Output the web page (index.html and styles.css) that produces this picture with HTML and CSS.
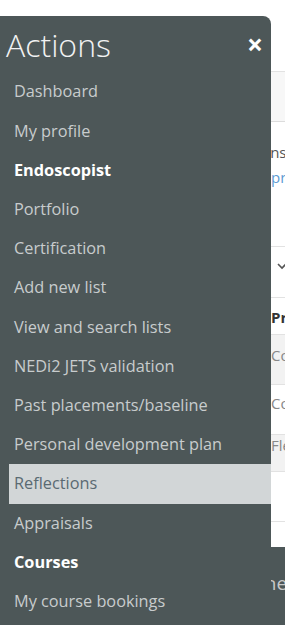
FILE: index.html
```html
<!DOCTYPE html>
<html lang="en">
<head>
    <meta charset="UTF-8">
    <meta name="viewport" content="width=device-width, initial-scale=1.0">
    <title>Portfolio</title>
    <link rel="stylesheet" href="styles.css">
</head>
<body>
    <div class="page">
        <div class="topbar"></div>
        <div class="toolbar"></div>

        <div class="intro">
            <p class="intro-line">Plans: review your list</p>
            <p class="intro-line"><a href="#">previous placements</a></p>
        </div>

        <div class="filter">
            <svg class="chevron" width="10" height="7" viewBox="0 0 10 7"><polyline points="1,1 5,5 9,1" fill="none" stroke="#555" stroke-width="1.6"/></svg>
        </div>

        <div class="lists">
            <div class="row head">Procedure</div>
            <div class="row shade first">Colonoscopy</div>
            <div class="row second">Colonoscopy</div>
            <div class="row shade third">Flexi sigmoidoscopy</div>
            <div class="row blank"></div>
            <div class="row blank last"></div>
        </div>

        <footer class="footer">
            <p>the JAG portfolio</p>
        </footer>
    </div>

    <aside class="drawer">
        <div class="drawer-head">
            <h1>Actions</h1>
            <a href="#" class="close">&times;</a>
        </div>
        <nav class="menu">
            <a href="#">Dashboard</a>
            <a href="#">My profile</a>
            <span class="section">Endoscopist</span>
            <a href="#">Portfolio</a>
            <a href="#">Certification</a>
            <a href="#">Add new list</a>
            <a href="#">View and search lists</a>
            <a href="#">NEDi2 JETS validation</a>
            <a href="#">Past placements/baseline</a>
            <a href="#">Personal development plan</a>
            <a href="#" class="active">Reflections</a>
            <a href="#">Appraisals</a>
            <span class="section">Courses</span>
            <a href="#">My course bookings</a>
        </nav>
    </aside>
</body>
</html>
```

FILE: styles.css
```css
html {
    height: 625px;
    overflow: hidden;
}
body {
    font-family: "Open Sans", Arial, sans-serif;
    margin: 0;
    padding: 0;
    background-color: #fff;
    overflow: hidden;
    height: 625px;
}
.page {
    width: 285px;
    white-space: nowrap;
    overflow: hidden;
}
.topbar {
    height: 71px;
}
.toolbar {
    height: 49px;
    background-color: #f7f7f7;
    border-top: 1px solid #e2e2e2;
    border-bottom: 1px solid #dcdcdc;
}
.intro {
    height: 124px;
    padding-top: 18px;
    box-sizing: border-box;
}
.intro-line {
    margin: 0;
    padding-left: 249px;
    font-size: 15px;
    line-height: 25px;
    color: #555;
}
.intro-line a {
    color: #5d9bd3;
    text-decoration: none;
    margin-left: 22px;
}
.filter {
    height: 52px;
    padding: 16px 0 0 277px;
    box-sizing: border-box;
    border-top: 1px solid #e2e2e2;
    border-bottom: 1px solid #e2e2e2;
}
.filter .chevron {
    display: block;
}
.lists {
    font-size: 15px;
    line-height: 20px;
}
.row {
    box-sizing: border-box;
    height: 50px;
    padding-left: 271px;
    border-bottom: 1px solid #e2e2e2;
    color: #888;
}
.row.head {
    height: 37px;
    padding-top: 9px;
    color: #333;
    font-weight: bold;
}
.row.shade {
    background-color: #f2f2f2;
}
.row.first {
    padding-top: 10px;
}
.row.second {
    padding-top: 8px;
}
.row.third {
    height: 37px;
    padding-top: 0;
}
.row.last {
    height: 25px;
    border-bottom: none;
}
.footer {
    background-color: #4d5758;
    height: 78px;
    padding-top: 23px;
    box-sizing: border-box;
}
.footer p {
    margin: 0;
    padding-left: 258px;
    font-size: 19px;
    line-height: 26px;
    color: #c9c9c9;
}
.drawer {
    position: absolute;
    top: 16px;
    left: 0;
    width: 271px;
    height: 609px;
    background-color: #4d5758;
    border-top-right-radius: 8px;
}
.drawer-head {
    display: flex;
    align-items: center;
    justify-content: space-between;
    height: 56px;
    padding: 0 8px 0 6px;
}
.drawer-head h1 {
    margin: 0;
    font-size: 32px;
    font-weight: 300;
    color: #f2f2f2;
}
.close {
    color: #fff;
    font-size: 28px;
    font-weight: bold;
    text-decoration: none;
    line-height: 1;
}
.menu {
    display: flex;
    flex-direction: column;
    padding-top: 0.4px;
}
.menu a,
.menu .section {
    margin-left: 9px;
    padding: 8px 0 8px 5px;
    font-size: 16.3px;
    line-height: 23.2px;
    color: #c8cccd;
    text-decoration: none;
}
.menu .section {
    color: #fff;
    font-weight: bold;
}
.menu a.active {
    background-color: #d2d6d7;
    color: #5a6a72;
}
```
